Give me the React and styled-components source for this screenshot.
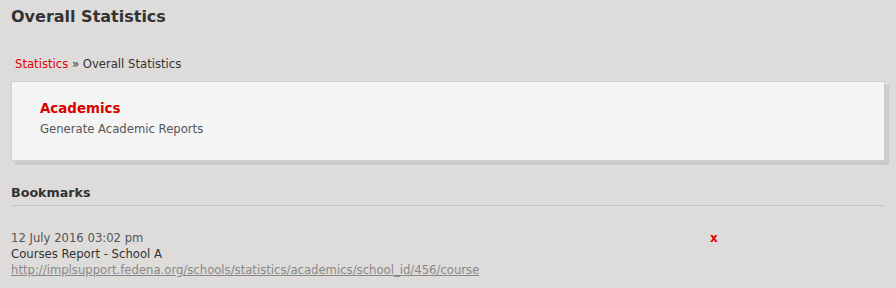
import styled, { createGlobalStyle } from 'styled-components'

const GlobalStyle = createGlobalStyle`
  html, body {
    margin: 0;
    padding: 0;
    background: #dedcda;
  }
  body {
    font-family: 'DejaVu Sans', Verdana, sans-serif;
    font-size: 11.65px;
    color: #333;
  }
`

const Page = styled.div`
  width: 896px;
  height: 288px;
  overflow: hidden;
  padding: 0 11px;
  box-sizing: border-box;
`

const PageTitle = styled.h1`
  margin: 0;
  padding-top: 6px;
  font-size: 16px;
  line-height: 22px;
  font-weight: bold;
  color: #333;
`

const Breadcrumb = styled.div`
  margin-top: 28px;
  padding-left: 4px;
  font-size: 11.65px;
  line-height: 16px;
  color: #333;

  & a {
    color: #e00000;
    text-decoration: none;
  }
`

const Card = styled.div`
  margin-top: 9px;
  width: 874px;
  height: 80px;
  box-sizing: border-box;
  background: #f4f4f4;
  border: 1px solid #cfcfcf;
  box-shadow: 4px 4px 0 #cbcbcb;
  padding: 17px 28px 0;
`

const CardTitle = styled.a`
  display: block;
  font-size: 13.4px;
  line-height: 20px;
  font-weight: bold;
  color: #d90000;
  text-decoration: none;
`

const CardText = styled.div`
  margin-top: 2px;
  font-size: 11.65px;
  line-height: 16px;
  color: #555;
`

const SectionTitle = styled.h2`
  margin: 24px 0 0;
  padding-bottom: 4px;
  border-bottom: 1px solid #c8c6c4;
  font-size: 12.7px;
  line-height: 16px;
  font-weight: bold;
  color: #333;
`

const Bookmark = styled.div`
  margin-top: 24px;
  display: grid;
  grid-template-columns: 699px auto;
`

const BookmarkInfo = styled.div`
  font-size: 11.65px;
  line-height: 16px;
`

const Date = styled.div`
  color: #555;
`

const Name = styled.div`
  color: #333;
`

const Link = styled.a`
  color: #888;
  text-decoration: underline;
`

const Remove = styled.a`
  font-size: 12px;
  line-height: 16px;
  font-weight: bold;
  color: #e00000;
  text-decoration: none;
  cursor: pointer;
`

export default function App() {
  return (
    <>
      <GlobalStyle />
      <Page>
        <PageTitle>Overall Statistics</PageTitle>
        <Breadcrumb>
          <a href="#">Statistics</a> » Overall Statistics
        </Breadcrumb>
        <Card>
          <CardTitle href="#">Academics</CardTitle>
          <CardText>Generate Academic Reports</CardText>
        </Card>
        <SectionTitle>Bookmarks</SectionTitle>
        <Bookmark>
          <BookmarkInfo>
            <Date>12 July 2016 03:02 pm</Date>
            <Name>Courses Report - School A</Name>
            <Link href="#">http://implsupport.fedena.org/schools/statistics/academics/school_id/456/course</Link>
          </BookmarkInfo>
          <Remove>x</Remove>
        </Bookmark>
      </Page>
    </>
  )
}
